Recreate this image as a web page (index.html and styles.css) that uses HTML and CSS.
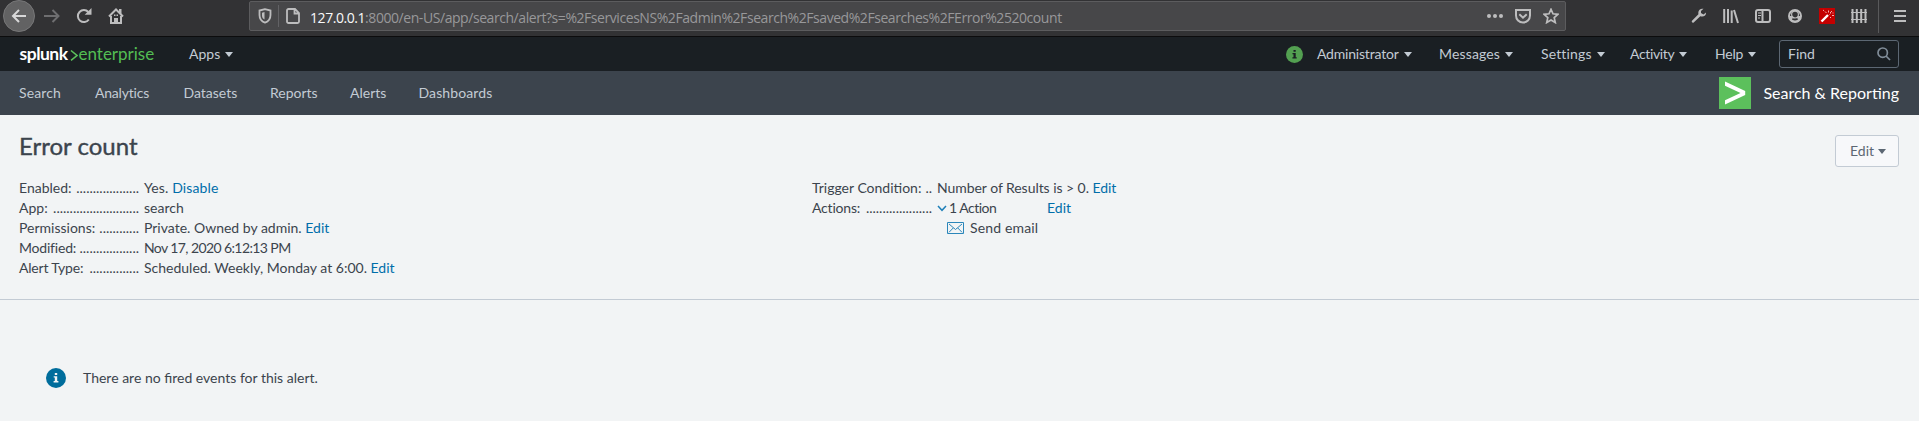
FILE: index.html
```html
<!DOCTYPE html>
<html lang="en">
<head>
<meta charset="utf-8">
<title>Error count | Splunk</title>
<link rel="stylesheet" href="styles.css">
</head>
<body>
<div class="toolbar">
  <div class="nav-buttons">
    <span class="back"><svg width="16" height="16" viewBox="0 0 16 16"><path d="M15 8H2M8 2L2 8l6 6"/></svg></span>
    <svg class="forward" width="16" height="16" viewBox="0 0 16 16"><path d="M0 8h14.500M8.500 2L14.500 8l-6 6"/></svg>
    <svg class="reload" width="16" height="16" viewBox="0 0 16 16"><path d="M12.800 11.500A6 6 0 1 1 12.300 4"/><path class="solid" d="M15.500 0v6.800H8.700z"/></svg>
    <svg class="home" width="16" height="16" viewBox="0 0 16 16"><path d="M1 8.500L8 1.500l7 7M3 8v7h10V8"/><path class="solid" d="M11 1h2.500v5L11 4zM6 15v-5h4v5zM6 6.500h1.500V8H6zM8.500 6.500H10V8H8.500z"/></svg>
  </div>
  <div class="urlbar">
    <svg class="shield" width="14" height="16" viewBox="0 0 14 16"><path d="M7 1.200L1.500 2.500v4.500c0 4 2.200 6.500 5.500 7.600 3.300-1.100 5.500-3.600 5.500-7.600V2.500z"/><path class="solid" d="M6.500 4L4 4.700V7.500c0 2 .8 3.200 2.500 4z"/></svg>
    <span class="url-split"></span>
    <svg class="doc" width="14" height="16" viewBox="0 0 14 16"><path d="M3 1h6l4 4v8.500a1.500 1.500 0 0 1-1.500 1.500h-9A1.500 1.500 0 0 1 1 13.500v-11A1.500 1.500 0 0 1 2.500 1zM8.500 1v4.500H13"/></svg>
    <span class="url"><b>127.0.0.1</b>:8000/en-US/app/search/alert?s=%2FservicesNS%2Fadmin%2Fsearch%2Fsaved%2Fsearches%2FError%2520count</span>
    <svg class="more" width="16" height="16" viewBox="0 0 16 16"><circle cx="2" cy="8" r="2"/><circle cx="8" cy="8" r="2"/><circle cx="14" cy="8" r="2"/></svg>
    <svg class="pocket" width="16" height="16" viewBox="0 0 16 16"><path d="M1 2h14v5.500a7 7 0 0 1-14 0zM4.300 6.200L8 9.700l3.700-3.500"/></svg>
    <svg class="star" width="16" height="16" viewBox="0 0 16 16"><path d="M8 1.300l2 4.500 4.900.5-3.700 3.300 1.100 5L8 12.100l-4.300 2.500 1.100-5L1.100 6.300 6 5.800z"/></svg>
  </div>
  <div class="extensions">
    <svg width="16" height="16" viewBox="0 0 16 16"><path class="solid" d="M15 4.500L12.500 6.500 10 5l0-2L12.500.8C10 .2 7.500 1.500 7.300 4.500L7.400 6.300 1 12.800c-.9 1 .6 2.600 1.700 1.700L9.300 8.200c3.200 1 6-.7 5.700-3.700z"/></svg>
    <svg width="16" height="16" viewBox="0 0 16 16"><path d="M1.200 1v14M5 1v14M8.700 2.500V15M11 2l4 13"/></svg>
    <svg width="16" height="16" viewBox="0 0 16 16"><rect x="1" y="2" width="14" height="12" rx="2"/><path d="M7.500 2v12"/><path class="thin" d="M3 5h3M3 7.500h3M3 10h2"/></svg>
    <svg width="16" height="16" viewBox="0 0 16 16"><circle cx="8" cy="8" r="6"/><path class="solid" fill-rule="evenodd" d="M2 8h12v2.500L11.500 13.800h-7L2 10.500zM4.800 11.200C6.500 13 9.500 13 11.200 11.200L10 10H6z"/><circle class="face" cx="8" cy="6.600" r="3.400"/></svg>
    <svg width="16" height="16" viewBox="0 0 16 16"><rect class="red" width="16" height="16"/><path class="wand" d="M2.500 13.500L9 7"/><path class="spark" d="M9.500 2.500v2M13 7.500h2M11 5l2-2M6 3.500L7.500 5M12 10l-1-1M10.500 6.500l1-1M4 2l1 .8M13.500 5h1"/></svg>
    <svg width="16" height="16" viewBox="0 0 16 16"><path d="M1.500 1v14M5.800 1v14M10.200 1v14M14.500 1v14"/><path class="thin" d="M0 4.500h16M0 11.500h16"/></svg>
    <span class="bar-split"></span>
    <svg width="12" height="16" viewBox="0 0 12 16"><path d="M0 3h12M0 8h12M0 13h12"/></svg>
  </div>
</div>

<header class="header">
  <div class="brand"><span class="splunk">splunk</span><svg width="8" height="14" viewBox="0 0 8 14"><path d="M1 1.500L7 6.500l-6 4.800"/></svg><span class="edition">enterprise</span></div>
  <span class="menu apps">Apps<i class="caret"></i></span>
  <div class="menus">
    <svg class="status" width="17" height="17" viewBox="0 0 17 17"><circle cx="8.500" cy="8.500" r="8.500"/><path d="M7.500 4h2.200v1.800H7.500zM6.500 7h3.200v4.300h1V12.600H6.400V11.300h1.100V8.200h-1z"/></svg>
    <span class="menu admin">Administrator<i class="caret"></i></span>
    <span class="menu messages">Messages<i class="caret"></i></span>
    <span class="menu settings">Settings<i class="caret"></i></span>
    <span class="menu activity">Activity<i class="caret"></i></span>
    <span class="menu help">Help<i class="caret"></i></span>
    <div class="find"><span>Find</span><svg width="14" height="14" viewBox="0 0 14 14"><circle cx="5.700" cy="5.700" r="4.700"/><path d="M9 9l4 4"/></svg></div>
  </div>
</header>

<nav class="appnav">
  <span class="wide">Search</span><span class="tight">Analytics</span><span>Datasets</span><span>Reports</span><span>Alerts</span><span class="wide">Dashboards</span>
  <div class="app"><span class="app-icon"><svg width="32" height="32" viewBox="0 0 32 32"><path d="M6 4.500L26.200 14v4L6 27.500v-4.200L21.500 16 6 8.700z"/></svg></span><span class="app-name">Search &amp; Reporting</span></div>
</nav>

<main>
  <div class="title-row"><h1>Error count</h1><span class="edit-btn">Edit<i class="caret"></i></span></div>
  <div class="details">
    <dl>
      <dt>Enabled:<i>...................</i></dt><dd class="wide">Yes. <a>Disable</a></dd>
      <dt>App:<i>..........................</i></dt><dd>search</dd>
      <dt>Permissions:<i>............</i></dt><dd>Private. Owned by admin. <a>Edit</a></dd>
      <dt><span class="tight">Modified:</span><i>..................</i></dt><dd class="date">Nov 17, 2020 6:12:13 PM</dd>
      <dt><span class="tight">Alert Type:</span><i>...............</i></dt><dd>Scheduled. Weekly, Monday at 6:00. <a>Edit</a></dd>
    </dl>
    <dl>
      <dt>Trigger Condition:<i>..</i></dt><dd class="condition">Number of Results is &gt; 0. <a>Edit</a></dd>
      <dt><span class="tight">Actions:</span><i>....................</i></dt>
      <dd class="actions"><svg width="10" height="7" viewBox="0 0 10 7"><path d="M1 1l4 4.300L9 1"/></svg><span class="count">1 Action</span><a>Edit</a></dd>
      <dd class="email"><svg width="17" height="12" viewBox="0 0 17 12"><path d="M.5.5h16v11H.5zM2 2l6.500 5.500L15 2M2 10.300L6.200 6M15 10.300L10.800 6"/></svg><span>Send email</span></dd>
    </dl>
  </div>
  <div class="notice">
    <svg width="20" height="20" viewBox="0 0 20 20"><circle cx="10" cy="10" r="10"/><path d="M8.800 5h2.400v2H8.800zM7.700 8.200h3.500v4.900h1.200V14.500H7.600V13.100h1.200V9.600H7.700z"/></svg>
    <span>There are no fired events for this alert.</span>
  </div>
</main>
</body>
</html>
```
FILE: styles.css
```css
* { box-sizing: border-box; }
body {
  margin: 0;
  height: 421px;
  overflow: hidden;
  background: #f2f4f5;
  color: #3c444d;
  font: 14px/20px Lato, "Liberation Sans", sans-serif;
  white-space: nowrap;
}
svg { display: block; flex: none; }
i { font-style: normal; }
.wide { letter-spacing: 0.12px; }
.tight { letter-spacing: -0.2px; }

/* Browser toolbar */
.toolbar {
  display: flex;
  height: 37px;
  background: #323234;
  border-bottom: 1px solid #0c0c0d;
}
.toolbar svg { fill: none; stroke: #bdbdbe; stroke-width: 2; }
.toolbar .solid { fill: #bdbdbe; stroke: none; }
.toolbar .thin { stroke-width: 1.2; }
.nav-buttons { display: flex; align-items: center; width: 249px; height: 32px; padding-left: 3px; }
.back {
  display: flex;
  align-items: center;
  justify-content: center;
  width: 32px;
  height: 32px;
  border-radius: 50%;
  background: #626263;
  border: 1px solid #777778;
}
.toolbar .back svg { stroke: #d8d8d9; }
.toolbar .forward { margin-left: 9px; stroke: #6e6e70; }
.reload { margin-left: 16px; }
.home { margin-left: 16px; }
.urlbar {
  display: flex;
  align-items: center;
  width: 1317px;
  height: 30px;
  margin-top: 1px;
  padding: 0 6px 0 8px;
  background: #474749;
  border: 1px solid #5c5c5e;
  border-radius: 2px;
}
.urlbar .shield { stroke-width: 1.8; }
.urlbar .doc { stroke-width: 1.8; }
.url-split { width: 1px; height: 22px; margin: 0 7px 0 6px; background: #626265; }
.url {
  flex: 1;
  margin-left: 10px;
  padding-top: 3px;
  font: 14px/20px "Open Sans", "Noto Sans", sans-serif;
  letter-spacing: -0.44px;
  color: #98989a;
}
.url b { font-weight: 400; color: #f9f9fa; }
.toolbar .more { fill: #bdbdbe; stroke: none; }
.pocket, .star { margin-left: 12px; }
.urlbar .star { stroke-width: 1.7; }
.extensions {
  display: flex;
  align-items: center;
  height: 32px;
  margin-left: 125px;
  gap: 16px;
}
.extensions .face { fill: #323234; stroke-width: 1.2; }
.extensions .red { fill: #c40000; stroke: none; }
.extensions .wand { stroke: #fff; stroke-width: 2.4; }
.extensions .spark { stroke: #f3b0b0; stroke-width: 1; }
.bar-split { width: 1px; height: 33px; margin: 0 -1px 0 -5px; background: #59595b; }

/* Product header */
.header {
  display: flex;
  align-items: center;
  height: 34px;
  padding: 0 20px 0 19.500px;
  background: #1a1f23;
  color: #c3cbd4;
}
.brand { display: flex; align-items: center; width: 169.500px; font-size: 17px; }
.brand svg { margin: 3px 1px 0 0; fill: none; stroke: #5cc05c; stroke-width: 1.6; }
.splunk { width: 50px; font-size: 17.500px; font-weight: 700; letter-spacing: -0.5px; color: #fff; }
.edition { color: #53bd53; }
.caret {
  width: 0;
  height: 0;
  border: 4px solid transparent;
  border-top: 5px solid currentColor;
  border-bottom: 0;
}
.menu { display: flex; align-items: center; }
.menu .caret { margin-left: 5px; }
.menus { display: flex; align-items: center; margin-left: auto; }
.status { margin-right: 14px; fill: #53a051; }
.status path { fill: #1a1f23; }
.admin { width: 122px; letter-spacing: -0.2px; }
.messages { width: 102px; letter-spacing: 0.15px; }
.settings { width: 89px; letter-spacing: 0.15px; }
.activity { width: 85px; letter-spacing: -0.35px; }
.help { width: 64px; letter-spacing: -0.2px; }
.find {
  display: flex;
  align-items: center;
  justify-content: space-between;
  width: 120px;
  height: 28px;
  padding: 0 7px 0 8px;
  border: 1px solid #5c6773;
  border-radius: 3px;
}
.find svg { fill: none; stroke: #818d99; stroke-width: 1.7; }

/* App navigation */
.appnav {
  display: grid;
  grid-template-columns: 76px 88.500px 86.500px 80px 68.500px 1fr auto;
  align-items: center;
  height: 44px;
  padding: 0 20px 1px 19px;
  background: #3c444d;
  color: #c3cbd4;
}
.app { display: flex; align-items: center; }
.app-icon { width: 32px; height: 32px; margin-right: 12px; background: #5cc05c; }
.app-icon path { fill: #fff; }
.app-name { font-size: 16px; color: #fff; }

/* Alert details */
.title-row { display: flex; justify-content: space-between; height: 63px; padding: 20px 20px 0 19px; }
h1 {
  margin: -1px 0 0;
  font-size: 24px;
  font-weight: 400;
  line-height: 24px;
  -webkit-text-stroke: 0.4px currentColor;
}
.edit-btn {
  display: flex;
  align-items: center;
  width: 64px;
  height: 32px;
  padding-left: 14px;
  border: 1px solid #c3cbd4;
  border-radius: 3px;
  background: #f7f8fa;
  color: #5c6773;
}
.edit-btn .caret { margin-left: 4px; }
.details { display: flex; height: 122px; padding-left: 19px; border-bottom: 1px solid #c3cbd4; }
dl {
  display: grid;
  grid-template-columns: 125px auto;
  grid-auto-rows: 20px;
  justify-content: start;
  width: 793px;
  margin: 0;
}
dt { display: flex; justify-content: space-between; width: 120px; }
dd { margin: 0; }
a { color: #006eaa; }
.date { letter-spacing: -0.6px; }
.condition { letter-spacing: -0.05px; }
.actions { display: flex; align-items: center; }
.actions svg { margin-right: 2px; fill: none; stroke: #1e7fb8; stroke-width: 1.5; }
.count { width: 98px; letter-spacing: -0.5px; }
.email { grid-column: 2; display: flex; align-items: center; padding-left: 10px; letter-spacing: 0.15px; }
.email svg { margin-right: 6px; fill: none; stroke: #2b86ba; }

.notice { display: flex; align-items: center; margin-top: 68px; padding-left: 46px; }
.notice svg { margin-right: 17px; fill: #006d9c; }
.notice path { fill: #f2f4f5; }
.notice span { margin-top: -1px; }
```
